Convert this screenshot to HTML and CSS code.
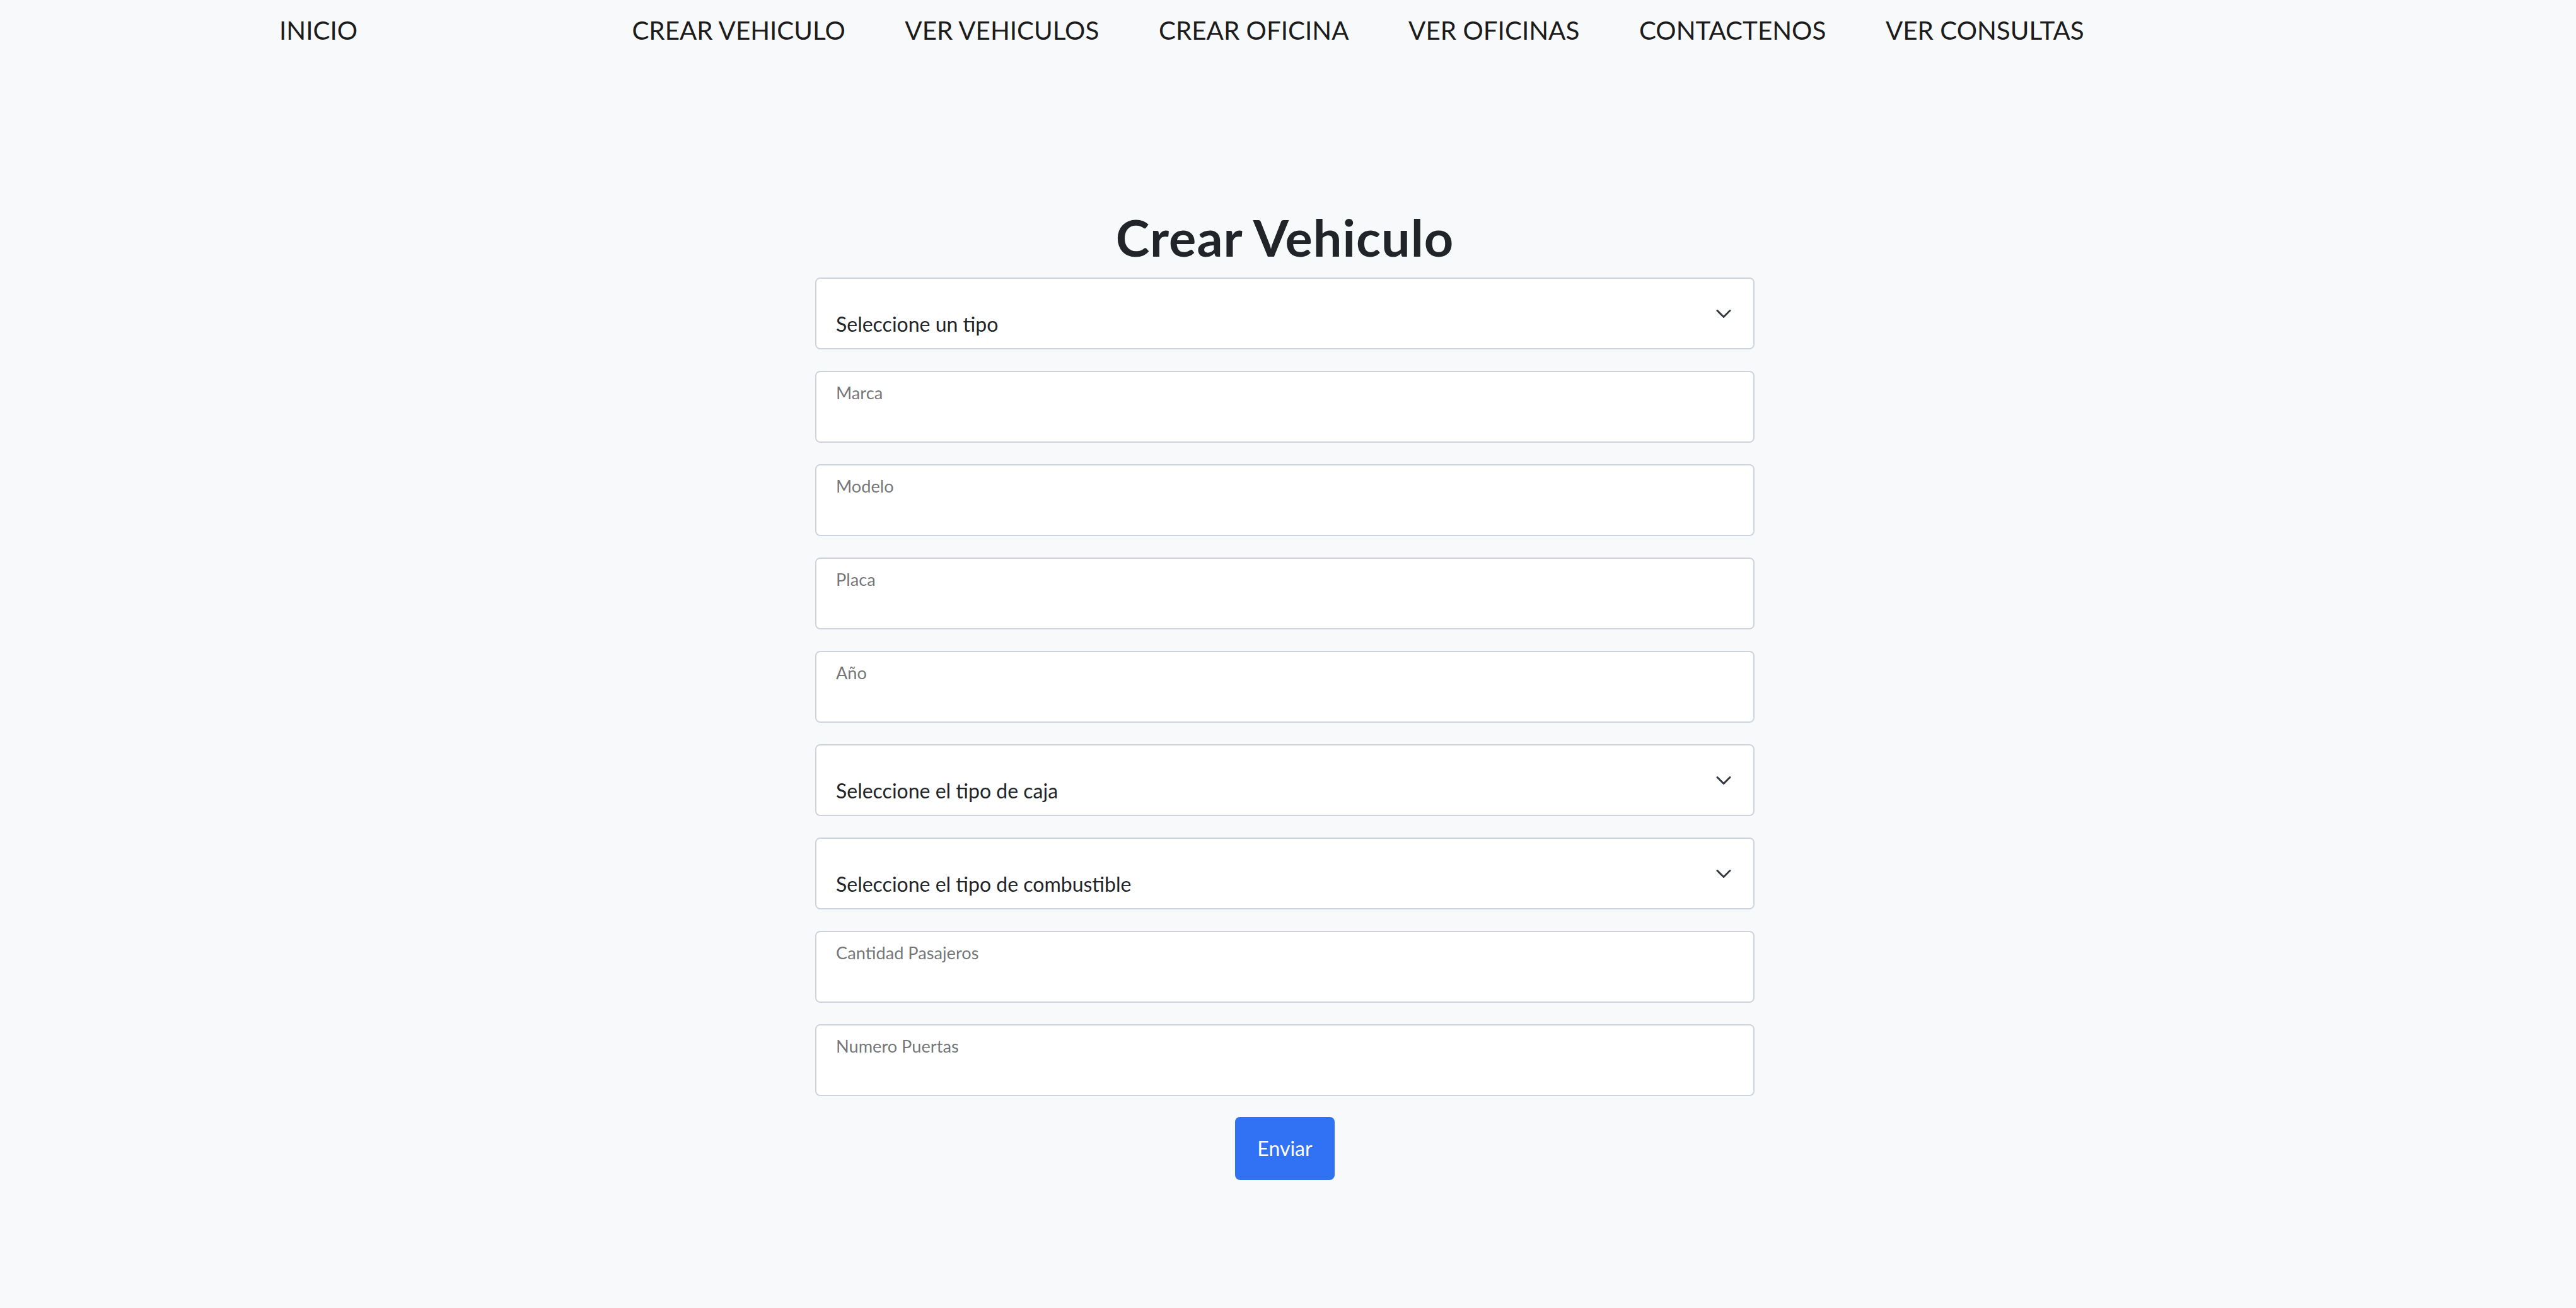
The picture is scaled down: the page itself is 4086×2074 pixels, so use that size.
FILE: index.html
```html
<!DOCTYPE html>
<html lang="es">
<head>
<meta charset="utf-8">
<title>Crear Vehiculo</title>
<link rel="stylesheet" href="styles.css">
</head>
<body>
<nav class="nav">
  <a class="brand" href="#">INICIO</a>
  <div class="nav-links">
    <a class="nav-link" href="#">CREAR VEHICULO</a>
    <a class="nav-link" href="#">VER VEHICULOS</a>
    <a class="nav-link" href="#">CREAR OFICINA</a>
    <a class="nav-link" href="#">VER OFICINAS</a>
    <a class="nav-link" href="#">CONTACTENOS</a>
    <a class="nav-link" href="#">VER CONSULTAS</a>
  </div>
</nav>
<main class="page">
  <div class="form-wrap">
    <h1 class="title">Crear Vehiculo</h1>
    <form class="form">
      <div class="field select">
        <span class="select-text">Seleccione un tipo</span>
        <svg class="chevron" width="24" height="15" viewBox="0 0 24 15"><path d="M2 2.5 L12 12.5 L22 2.5" fill="none" stroke="#343a40" stroke-width="3" stroke-linecap="round" stroke-linejoin="round"/></svg>
      </div>
      <div class="field"><span class="label">Marca</span></div>
      <div class="field"><span class="label">Modelo</span></div>
      <div class="field"><span class="label">Placa</span></div>
      <div class="field"><span class="label">Año</span></div>
      <div class="field select">
        <span class="select-text">Seleccione el tipo de caja</span>
        <svg class="chevron" width="24" height="15" viewBox="0 0 24 15"><path d="M2 2.5 L12 12.5 L22 2.5" fill="none" stroke="#343a40" stroke-width="3" stroke-linecap="round" stroke-linejoin="round"/></svg>
      </div>
      <div class="field select">
        <span class="select-text">Seleccione el tipo de combustible</span>
        <svg class="chevron" width="24" height="15" viewBox="0 0 24 15"><path d="M2 2.5 L12 12.5 L22 2.5" fill="none" stroke="#343a40" stroke-width="3" stroke-linecap="round" stroke-linejoin="round"/></svg>
      </div>
      <div class="field"><span class="label">Cantidad Pasajeros</span></div>
      <div class="field"><span class="label">Numero Puertas</span></div>
      <div class="actions">
        <button type="button" class="btn">Enviar</button>
      </div>
    </form>
  </div>
</main>
</body>
</html>
```

FILE: styles.css
```css
* { box-sizing: border-box; }

html, body {
  margin: 0;
  padding: 0;
}

body {
  background: #f8f9fa;
  font-family: Lato, "Noto Sans", sans-serif;
  color: #212529;
  min-height: 2074px;
}

.nav {
  display: flex;
  align-items: flex-start;
  padding: 16px 0 0 443px;
  font-size: 40.4px;
  line-height: 63px;
}

.nav a {
  color: #1c1c1c;
  text-decoration: none;
}

.nav-links {
  display: flex;
  margin-left: 388px;
}

.nav-link {
  padding: 0 47.3px;
}

.page {
  padding-right: 10px;
}

.form-wrap {
  width: 1490px;
  margin: 0 auto;
}

.title {
  margin: 249px 0 16px;
  font-size: 81px;
  line-height: 96px;
  font-weight: 700;
  letter-spacing: 1px;
  text-align: center;
  color: #212529;
}

.form {
  display: flex;
  flex-direction: column;
  gap: 34px;
}

.field {
  height: 114px;
  background: #fff;
  border: 2px solid #ced4da;
  border-radius: 8px;
  padding: 17px 31px 0;
}

.label {
  display: block;
  font-size: 27.2px;
  line-height: 1.2;
  color: rgba(33, 37, 41, 0.65);
}

.select {
  display: flex;
  align-items: flex-start;
  padding: 48px 35px 0 31px;
}

.select-text {
  font-size: 32px;
  line-height: 48px;
  color: #212529;
}

.chevron {
  margin-left: auto;
  align-self: center;
  margin-top: -48px;
}

.actions {
  display: flex;
  justify-content: center;
  margin-top: -1px;
}

.btn {
  width: 158px;
  height: 100px;
  border: none;
  border-radius: 8px;
  background: #3172f5;
  color: #fff;
  font-family: Lato, "Noto Sans", sans-serif;
  font-size: 32px;
  line-height: 48px;
  padding: 0;
}
```
